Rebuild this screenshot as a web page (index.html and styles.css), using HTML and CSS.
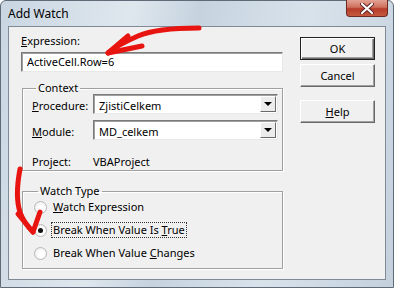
FILE: index.html
```html
<!DOCTYPE html>
<html lang="en">
<head>
    <meta charset="UTF-8">
    <meta name="viewport" content="width=device-width, initial-scale=1.0">
    <title>Add Watch</title>
    <link rel="stylesheet" href="styles.css">
</head>
<body>
    <div class="window">
        <div class="titlebar">
            <span class="title">Add Watch</span>
            <span class="close">
                <svg width="14" height="11" viewBox="0 0 14 11">
                    <path d="M2 1 L12 10 M12 1 L2 10" stroke="#5a2020" stroke-width="4" stroke-linecap="round"/>
                    <path d="M2 1 L12 10 M12 1 L2 10" stroke="#fff" stroke-width="2.2" stroke-linecap="round"/>
                </svg>
            </span>
        </div>

        <div class="client">
            <div class="main">
                <div class="field-label"><u>E</u>xpression:</div>
                <div class="textbox">ActiveCell.Row=6</div>

                <fieldset class="group context">
                    <legend>Context</legend>
                    <div class="row first">
                        <span class="lbl"><u>P</u>rocedure:</span>
                        <div class="combo"><span class="value">ZjistiCelkem</span><span class="drop"></span></div>
                    </div>
                    <div class="row">
                        <span class="lbl"><u>M</u>odule:</span>
                        <div class="combo"><span class="value">MD_celkem</span><span class="drop"></span></div>
                    </div>
                    <div class="row project">
                        <span class="lbl">Project:</span>
                        <span class="value">VBAProject</span>
                    </div>
                </fieldset>

                <fieldset class="group watch">
                    <legend>Watch Type</legend>
                    <div class="radio-row first">
                        <span class="radio"></span>
                        <span class="radio-text"><u>W</u>atch Expression</span>
                    </div>
                    <div class="radio-row">
                        <span class="radio checked"></span>
                        <span class="radio-text focused">Break When Value Is <u>T</u>rue</span>
                    </div>
                    <div class="radio-row">
                        <span class="radio"></span>
                        <span class="radio-text">Break When Value <u>C</u>hanges</span>
                    </div>
                </fieldset>
            </div>

            <div class="buttons">
                <div class="btn default">OK</div>
                <div class="btn">Cancel</div>
                <div class="btn help"><u>H</u>elp</div>
            </div>
        </div>

        <!-- red annotation arrows drawn over the dialog -->
        <svg class="arrows" width="394" height="288" viewBox="0 0 394 288">
            <g fill="none" stroke="#e8140f" stroke-linecap="round" stroke-linejoin="round">
                <path d="M199 28 C175 28 152 30 138 36 C124 42 114 48 108 53" stroke-width="5"/>
                <path d="M108 53 L128 36 M108 53 L142 46" stroke-width="5"/>
                <path d="M20 169 C17 185 16 200 20 212 C23 221 28 227 33 232" stroke-width="5"/>
                <path d="M33 232 L18 214 M33 232 L40 212" stroke-width="5"/>
            </g>
        </svg>
    </div>
</body>
</html>
```

FILE: styles.css
```css
body {
    margin: 0;
    padding: 0;
    background: #ffffff;
    font-family: "Noto Sans", "Open Sans", sans-serif;
    font-size: 11px;
    color: #000;
}
u {
    text-decoration: underline;
    text-underline-offset: 1px;
}
.window {
    position: relative;
    width: 394px;
    height: 288px;
    box-sizing: border-box;
    padding: 0 7px 7px 7px;
    display: flex;
    flex-direction: column;
    border: 1px solid #5f6b78;
    border-radius: 6px 6px 0 0;
    background: linear-gradient(100deg, #c9d6e2 0%, #dfe7ee 30%, #c6d3df 45%, #d8e2eb 70%, #c4d1dd 100%);
}
.titlebar {
    height: 26px;
    display: flex;
    align-items: flex-start;
    margin-top: -1px;
}
.title {
    margin-top: 6px;
    line-height: 16px;
    font-size: 12px;
}
.close {
    margin-left: auto;
    margin-right: -2px;
    width: 42px;
    height: 17px;
    box-sizing: border-box;
    border: 1px solid #6d2a22;
    border-top: none;
    border-radius: 0 0 4px 4px;
    background: linear-gradient(#e3a395 0%, #d0705e 45%, #b53c2a 55%, #c65a3f 100%);
    display: flex;
    align-items: center;
    justify-content: center;
}
.client {
    flex: 1;
    display: flex;
    gap: 17px;
    background: #f0f0f0;
    border: 1px solid #7e8a96;
}
.main {
    width: 262px;
    padding: 6px 0 0 12px;
    display: flex;
    flex-direction: column;
}
.field-label {
    line-height: 16px;
    margin-bottom: 3px;
}
.textbox {
    height: 20px;
    box-sizing: border-box;
    background: #fff;
    border-top: 1px solid #7a7a7a;
    border-left: 1px solid #7a7a7a;
    border-right: 1px solid #e8e8e8;
    border-bottom: 1px solid #e8e8e8;
    box-shadow: inset 1px 1px 0 #a0a0a0;
    padding-left: 5px;
    line-height: 18px;
}
.group {
    margin: 0 0 0 1px;
    border: 1px solid #a0a0a0;
    box-shadow: inset 1px 1px 0 #fff, 1px 1px 0 #fff;
    min-width: 0;
}
.group legend {
    padding: 0 2px;
    margin-left: 4px;
    line-height: 14px;
}
.context {
    margin-top: 9px;
    padding: 0 4px 2px 9px;
}
.row {
    display: flex;
    align-items: center;
    height: 20px;
    margin-top: 6px;
}
.row.first {
    margin-top: -1px;
}
.row.project {
    height: 16px;
    margin-top: 12px;
}
.lbl {
    width: 61px;
    flex-shrink: 0;
    padding-top: 2px;
}
.combo {
    flex: 1;
    height: 20px;
    box-sizing: border-box;
    background: #fff;
    border-top: 1px solid #7a7a7a;
    border-left: 1px solid #7a7a7a;
    border-right: 1px solid #e8e8e8;
    border-bottom: 1px solid #e8e8e8;
    box-shadow: inset 1px 1px 0 #a0a0a0;
    display: flex;
    align-items: center;
    padding: 0 1px 0 5px;
}
.combo .value {
    flex: 1;
    padding-top: 2px;
}
.drop {
    width: 16px;
    height: 16px;
    box-sizing: border-box;
    background: #ececec;
    border-top: 1px solid #fff;
    border-left: 1px solid #fff;
    border-right: 1px solid #6a6a6a;
    border-bottom: 1px solid #6a6a6a;
    display: flex;
    align-items: center;
    justify-content: center;
}
.drop::after {
    content: "";
    border-left: 4px solid transparent;
    border-right: 4px solid transparent;
    border-top: 4px solid #000;
}
.project .value {
    padding-top: 2px;
}
.watch {
    margin-top: 13px;
    padding: 0 4px 7px 11px;
}
.radio-row {
    display: flex;
    align-items: center;
    height: 16px;
    margin-top: 7px;
}
.radio-row.first {
    margin-top: 1px;
}
.radio {
    width: 13px;
    height: 13px;
    box-sizing: border-box;
    border-radius: 50%;
    border: 1px solid #b8b8b8;
    background: radial-gradient(circle at 60% 60%, #ffffff 30%, #e6e6e6 100%);
    margin-right: 4px;
    display: flex;
    align-items: center;
    justify-content: center;
}
.radio.checked::after {
    content: "";
    width: 5px;
    height: 5px;
    border-radius: 50%;
    background: #111;
}
.radio-text {
    line-height: 14px;
    padding: 0 1px;
    border: 1px dotted transparent;
}
.radio-text.focused {
    border-color: #333;
}
.buttons {
    padding-top: 10px;
    display: flex;
    flex-direction: column;
    gap: 4px;
}
.btn {
    width: 75px;
    height: 23px;
    box-sizing: border-box;
    background: #f0f0f0;
    border-top: 1px solid #fff;
    border-left: 1px solid #fff;
    border-right: 1px solid #696969;
    border-bottom: 1px solid #696969;
    box-shadow: inset -1px -1px 0 #a0a0a0;
    display: flex;
    align-items: center;
    justify-content: center;
    padding-bottom: 1px;
}
.btn.default {
    border: 1px solid #222;
    box-shadow: inset 1px 1px 0 #fff, inset -1px -1px 0 #696969, inset -2px -2px 0 #a0a0a0;
}
.btn.help {
    margin-top: 9px;
}
.arrows {
    position: absolute;
    left: -1px;
    top: -1px;
    pointer-events: none;
}
```
